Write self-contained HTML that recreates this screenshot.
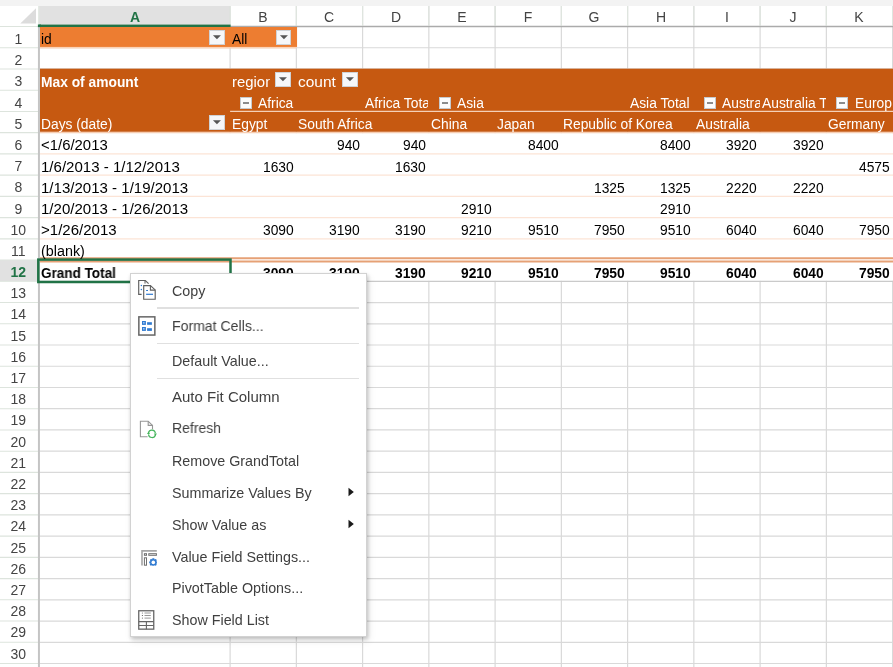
<!DOCTYPE html><html><head><meta charset='utf-8'><style>
*{margin:0;padding:0;box-sizing:border-box}
html,body{width:893px;height:667px;overflow:hidden;background:#fff;font-family:"Liberation Sans", sans-serif;position:relative}
.a{position:absolute}
.t,.m,.hn{will-change:transform}
.t{position:absolute;white-space:nowrap;line-height:1;font-size:13.8px;color:#000}
.cl{position:absolute;overflow:hidden;white-space:nowrap}
.hn{position:absolute;white-space:nowrap;line-height:1;font-size:14px;color:#444;text-align:center}
.m{position:absolute;white-space:nowrap;line-height:1;font-size:14.3px;color:#404040}
svg{position:absolute;left:0;top:0;overflow:visible}
</style></head><body>
<svg class="a" width="893" height="667" style="left:0;top:0">
<rect x="0" y="0" width="893" height="6" fill="#f3f3f3"/>
<rect x="38.95" y="6" width="191.14999999999998" height="20.5" fill="#e1e1e1"/>
<rect x="0" y="260.074" width="38.95" height="21.234" fill="#e1e1e1"/>
<polygon points="36,8.2 36,23.5 20.3,23.5" fill="#dcdcdc"/>
<line x1="0" y1="26.50" x2="38.95" y2="26.50" stroke="#dde4dd" stroke-width="1.1"/>
<line x1="38.95" y1="26.50" x2="893" y2="26.50" stroke="#d9d9d9" stroke-width="1.2"/>
<line x1="0" y1="47.73" x2="38.95" y2="47.73" stroke="#dde4dd" stroke-width="1.1"/>
<line x1="38.95" y1="47.73" x2="893" y2="47.73" stroke="#d9d9d9" stroke-width="1.2"/>
<line x1="0" y1="68.97" x2="38.95" y2="68.97" stroke="#dde4dd" stroke-width="1.1"/>
<line x1="38.95" y1="68.97" x2="893" y2="68.97" stroke="#d9d9d9" stroke-width="1.2"/>
<line x1="0" y1="90.20" x2="38.95" y2="90.20" stroke="#dde4dd" stroke-width="1.1"/>
<line x1="38.95" y1="90.20" x2="893" y2="90.20" stroke="#d9d9d9" stroke-width="1.2"/>
<line x1="0" y1="111.44" x2="38.95" y2="111.44" stroke="#dde4dd" stroke-width="1.1"/>
<line x1="38.95" y1="111.44" x2="893" y2="111.44" stroke="#d9d9d9" stroke-width="1.2"/>
<line x1="0" y1="132.67" x2="38.95" y2="132.67" stroke="#dde4dd" stroke-width="1.1"/>
<line x1="38.95" y1="132.67" x2="893" y2="132.67" stroke="#d9d9d9" stroke-width="1.2"/>
<line x1="0" y1="153.90" x2="38.95" y2="153.90" stroke="#dde4dd" stroke-width="1.1"/>
<line x1="38.95" y1="153.90" x2="893" y2="153.90" stroke="#d9d9d9" stroke-width="1.2"/>
<line x1="0" y1="175.14" x2="38.95" y2="175.14" stroke="#dde4dd" stroke-width="1.1"/>
<line x1="38.95" y1="175.14" x2="893" y2="175.14" stroke="#d9d9d9" stroke-width="1.2"/>
<line x1="0" y1="196.37" x2="38.95" y2="196.37" stroke="#dde4dd" stroke-width="1.1"/>
<line x1="38.95" y1="196.37" x2="893" y2="196.37" stroke="#d9d9d9" stroke-width="1.2"/>
<line x1="0" y1="217.61" x2="38.95" y2="217.61" stroke="#dde4dd" stroke-width="1.1"/>
<line x1="38.95" y1="217.61" x2="893" y2="217.61" stroke="#d9d9d9" stroke-width="1.2"/>
<line x1="0" y1="238.84" x2="38.95" y2="238.84" stroke="#dde4dd" stroke-width="1.1"/>
<line x1="38.95" y1="238.84" x2="893" y2="238.84" stroke="#d9d9d9" stroke-width="1.2"/>
<line x1="0" y1="260.07" x2="38.95" y2="260.07" stroke="#dde4dd" stroke-width="1.1"/>
<line x1="38.95" y1="260.07" x2="893" y2="260.07" stroke="#d9d9d9" stroke-width="1.2"/>
<line x1="0" y1="281.31" x2="38.95" y2="281.31" stroke="#dde4dd" stroke-width="1.1"/>
<line x1="38.95" y1="281.31" x2="893" y2="281.31" stroke="#d9d9d9" stroke-width="1.2"/>
<line x1="0" y1="302.54" x2="38.95" y2="302.54" stroke="#dde4dd" stroke-width="1.1"/>
<line x1="38.95" y1="302.54" x2="893" y2="302.54" stroke="#d9d9d9" stroke-width="1.2"/>
<line x1="0" y1="323.78" x2="38.95" y2="323.78" stroke="#dde4dd" stroke-width="1.1"/>
<line x1="38.95" y1="323.78" x2="893" y2="323.78" stroke="#d9d9d9" stroke-width="1.2"/>
<line x1="0" y1="345.01" x2="38.95" y2="345.01" stroke="#dde4dd" stroke-width="1.1"/>
<line x1="38.95" y1="345.01" x2="893" y2="345.01" stroke="#d9d9d9" stroke-width="1.2"/>
<line x1="0" y1="366.24" x2="38.95" y2="366.24" stroke="#dde4dd" stroke-width="1.1"/>
<line x1="38.95" y1="366.24" x2="893" y2="366.24" stroke="#d9d9d9" stroke-width="1.2"/>
<line x1="0" y1="387.48" x2="38.95" y2="387.48" stroke="#dde4dd" stroke-width="1.1"/>
<line x1="38.95" y1="387.48" x2="893" y2="387.48" stroke="#d9d9d9" stroke-width="1.2"/>
<line x1="0" y1="408.71" x2="38.95" y2="408.71" stroke="#dde4dd" stroke-width="1.1"/>
<line x1="38.95" y1="408.71" x2="893" y2="408.71" stroke="#d9d9d9" stroke-width="1.2"/>
<line x1="0" y1="429.95" x2="38.95" y2="429.95" stroke="#dde4dd" stroke-width="1.1"/>
<line x1="38.95" y1="429.95" x2="893" y2="429.95" stroke="#d9d9d9" stroke-width="1.2"/>
<line x1="0" y1="451.18" x2="38.95" y2="451.18" stroke="#dde4dd" stroke-width="1.1"/>
<line x1="38.95" y1="451.18" x2="893" y2="451.18" stroke="#d9d9d9" stroke-width="1.2"/>
<line x1="0" y1="472.41" x2="38.95" y2="472.41" stroke="#dde4dd" stroke-width="1.1"/>
<line x1="38.95" y1="472.41" x2="893" y2="472.41" stroke="#d9d9d9" stroke-width="1.2"/>
<line x1="0" y1="493.65" x2="38.95" y2="493.65" stroke="#dde4dd" stroke-width="1.1"/>
<line x1="38.95" y1="493.65" x2="893" y2="493.65" stroke="#d9d9d9" stroke-width="1.2"/>
<line x1="0" y1="514.88" x2="38.95" y2="514.88" stroke="#dde4dd" stroke-width="1.1"/>
<line x1="38.95" y1="514.88" x2="893" y2="514.88" stroke="#d9d9d9" stroke-width="1.2"/>
<line x1="0" y1="536.12" x2="38.95" y2="536.12" stroke="#dde4dd" stroke-width="1.1"/>
<line x1="38.95" y1="536.12" x2="893" y2="536.12" stroke="#d9d9d9" stroke-width="1.2"/>
<line x1="0" y1="557.35" x2="38.95" y2="557.35" stroke="#dde4dd" stroke-width="1.1"/>
<line x1="38.95" y1="557.35" x2="893" y2="557.35" stroke="#d9d9d9" stroke-width="1.2"/>
<line x1="0" y1="578.58" x2="38.95" y2="578.58" stroke="#dde4dd" stroke-width="1.1"/>
<line x1="38.95" y1="578.58" x2="893" y2="578.58" stroke="#d9d9d9" stroke-width="1.2"/>
<line x1="0" y1="599.82" x2="38.95" y2="599.82" stroke="#dde4dd" stroke-width="1.1"/>
<line x1="38.95" y1="599.82" x2="893" y2="599.82" stroke="#d9d9d9" stroke-width="1.2"/>
<line x1="0" y1="621.05" x2="38.95" y2="621.05" stroke="#dde4dd" stroke-width="1.1"/>
<line x1="38.95" y1="621.05" x2="893" y2="621.05" stroke="#d9d9d9" stroke-width="1.2"/>
<line x1="0" y1="642.29" x2="38.95" y2="642.29" stroke="#dde4dd" stroke-width="1.1"/>
<line x1="38.95" y1="642.29" x2="893" y2="642.29" stroke="#d9d9d9" stroke-width="1.2"/>
<line x1="0" y1="663.52" x2="38.95" y2="663.52" stroke="#dde4dd" stroke-width="1.1"/>
<line x1="38.95" y1="663.52" x2="893" y2="663.52" stroke="#d9d9d9" stroke-width="1.2"/>
<line x1="230.10" y1="6" x2="230.10" y2="667" stroke="#d9d9d9" stroke-width="1.2"/>
<line x1="296.35" y1="6" x2="296.35" y2="667" stroke="#d9d9d9" stroke-width="1.2"/>
<line x1="362.60" y1="6" x2="362.60" y2="667" stroke="#d9d9d9" stroke-width="1.2"/>
<line x1="428.85" y1="6" x2="428.85" y2="667" stroke="#d9d9d9" stroke-width="1.2"/>
<line x1="495.10" y1="6" x2="495.10" y2="667" stroke="#d9d9d9" stroke-width="1.2"/>
<line x1="561.35" y1="6" x2="561.35" y2="667" stroke="#d9d9d9" stroke-width="1.2"/>
<line x1="627.60" y1="6" x2="627.60" y2="667" stroke="#d9d9d9" stroke-width="1.2"/>
<line x1="693.85" y1="6" x2="693.85" y2="667" stroke="#d9d9d9" stroke-width="1.2"/>
<line x1="760.10" y1="6" x2="760.10" y2="667" stroke="#d9d9d9" stroke-width="1.2"/>
<line x1="826.35" y1="6" x2="826.35" y2="667" stroke="#d9d9d9" stroke-width="1.2"/>
<line x1="892.60" y1="6" x2="892.60" y2="667" stroke="#d9d9d9" stroke-width="1.2"/>
<line x1="38.95" y1="26.5" x2="893" y2="26.5" stroke="#ababab" stroke-width="1.4"/>
<rect x="229.50" y="6" width="1.2" height="19.8" fill="#dfe5df"/>
<rect x="295.75" y="6" width="1.2" height="19.8" fill="#dfe5df"/>
<rect x="362.00" y="6" width="1.2" height="19.8" fill="#dfe5df"/>
<rect x="428.25" y="6" width="1.2" height="19.8" fill="#dfe5df"/>
<rect x="494.50" y="6" width="1.2" height="19.8" fill="#dfe5df"/>
<rect x="560.75" y="6" width="1.2" height="19.8" fill="#dfe5df"/>
<rect x="627.00" y="6" width="1.2" height="19.8" fill="#dfe5df"/>
<rect x="693.25" y="6" width="1.2" height="19.8" fill="#dfe5df"/>
<rect x="759.50" y="6" width="1.2" height="19.8" fill="#dfe5df"/>
<rect x="825.75" y="6" width="1.2" height="19.8" fill="#dfe5df"/>
<rect x="892.00" y="6" width="1.2" height="19.8" fill="#dfe5df"/>
<rect x="37.95" y="24.6" width="192.64999999999998" height="2.8" fill="#217346"/>
<rect x="39.95" y="27.0" width="257.1" height="19.934" fill="#ED7D31"/>
<line x1="39.95" y1="47.73" x2="296.35" y2="47.73" stroke="#FAD3B8" stroke-width="1.3"/>
<rect x="39.95" y="68.668" width="854.05" height="63.102000000000004" fill="#C65911"/>
<rect x="39.95" y="133.17000000000002" width="854.05" height="147.638" fill="#ffffff"/>
<line x1="39.95" y1="132.67" x2="893" y2="132.67" stroke="#F6CDB2" stroke-width="1.3"/>
<line x1="39.95" y1="153.90" x2="893" y2="153.90" stroke="#FCE4D6" stroke-width="1.2"/>
<line x1="39.95" y1="175.14" x2="893" y2="175.14" stroke="#FCE4D6" stroke-width="1.2"/>
<line x1="39.95" y1="196.37" x2="893" y2="196.37" stroke="#FCE4D6" stroke-width="1.2"/>
<line x1="39.95" y1="217.61" x2="893" y2="217.61" stroke="#FCE4D6" stroke-width="1.2"/>
<line x1="39.95" y1="238.84" x2="893" y2="238.84" stroke="#FCE4D6" stroke-width="1.2"/>
<line x1="230.1" y1="111.4" x2="893" y2="111.4" stroke="#F4D0B8" stroke-width="1.3"/>
<line x1="39.95" y1="258.3" x2="893" y2="258.3" stroke="#E6A176" stroke-width="2"/>
<line x1="39.95" y1="261.6" x2="893" y2="261.6" stroke="#E6A176" stroke-width="2"/>
<line x1="38.95" y1="281.31" x2="893" y2="281.31" stroke="#cacaca" stroke-width="1.2"/>
<line x1="38.95" y1="26.5" x2="38.95" y2="667" stroke="#c4c4c4" stroke-width="2"/>
<rect x="38.05" y="6" width="1.3" height="20.5" fill="#e3e9e3"/>
<rect x="37.95" y="24.5" width="3" height="2.6" fill="#217346"/>
<rect x="38.3" y="259.6" width="192.20000000000002" height="22.4" fill="none" stroke="#217346" stroke-width="2.5"/>
</svg>
<div class="hn" style="left:114.53px;top:10.4px;width:40px;color:#217346;font-weight:bold;">A</div>
<div class="hn" style="left:243.23px;top:10.4px;width:40px;">B</div>
<div class="hn" style="left:309.48px;top:10.4px;width:40px;">C</div>
<div class="hn" style="left:375.73px;top:10.4px;width:40px;">D</div>
<div class="hn" style="left:441.98px;top:10.4px;width:40px;">E</div>
<div class="hn" style="left:508.23px;top:10.4px;width:40px;">F</div>
<div class="hn" style="left:574.48px;top:10.4px;width:40px;">G</div>
<div class="hn" style="left:640.73px;top:10.4px;width:40px;">H</div>
<div class="hn" style="left:706.98px;top:10.4px;width:40px;">I</div>
<div class="hn" style="left:773.23px;top:10.4px;width:40px;">J</div>
<div class="hn" style="left:839.48px;top:10.4px;width:40px;">K</div>
<div class="hn" style="left:0;top:31.90px;width:36.6px;">1</div>
<div class="hn" style="left:0;top:53.10px;width:36.6px;">2</div>
<div class="hn" style="left:0;top:74.30px;width:36.6px;">3</div>
<div class="hn" style="left:0;top:95.50px;width:36.6px;">4</div>
<div class="hn" style="left:0;top:116.70px;width:36.6px;">5</div>
<div class="hn" style="left:0;top:137.90px;width:36.6px;">6</div>
<div class="hn" style="left:0;top:159.10px;width:36.6px;">7</div>
<div class="hn" style="left:0;top:180.30px;width:36.6px;">8</div>
<div class="hn" style="left:0;top:201.50px;width:36.6px;">9</div>
<div class="hn" style="left:0;top:222.70px;width:36.6px;">10</div>
<div class="hn" style="left:0;top:243.90px;width:36.6px;">11</div>
<div class="hn" style="left:0;top:265.09px;width:36.6px;color:#217346;font-weight:bold;">12</div>
<div class="hn" style="left:0;top:286.29px;width:36.6px;">13</div>
<div class="hn" style="left:0;top:307.49px;width:36.6px;">14</div>
<div class="hn" style="left:0;top:328.69px;width:36.6px;">15</div>
<div class="hn" style="left:0;top:349.89px;width:36.6px;">16</div>
<div class="hn" style="left:0;top:371.09px;width:36.6px;">17</div>
<div class="hn" style="left:0;top:392.29px;width:36.6px;">18</div>
<div class="hn" style="left:0;top:413.49px;width:36.6px;">19</div>
<div class="hn" style="left:0;top:434.69px;width:36.6px;">20</div>
<div class="hn" style="left:0;top:455.89px;width:36.6px;">21</div>
<div class="hn" style="left:0;top:477.09px;width:36.6px;">22</div>
<div class="hn" style="left:0;top:498.29px;width:36.6px;">23</div>
<div class="hn" style="left:0;top:519.49px;width:36.6px;">24</div>
<div class="hn" style="left:0;top:540.69px;width:36.6px;">25</div>
<div class="hn" style="left:0;top:561.89px;width:36.6px;">26</div>
<div class="hn" style="left:0;top:583.09px;width:36.6px;">27</div>
<div class="hn" style="left:0;top:604.29px;width:36.6px;">28</div>
<div class="hn" style="left:0;top:625.49px;width:36.6px;">29</div>
<div class="hn" style="left:0;top:646.69px;width:36.6px;">30</div>
<div class="t" style="left:40.95px;top:33.12px;color:#000;font-size:13.8px;">id</div>
<div class="t" style="left:232.30px;top:33.12px;color:#000;font-size:13.8px;">All</div>
<div class="a" style="left:209.3px;top:30.1px;width:15.7px;height:14.7px;background:#f6f7f9;border:1px solid #cfd2d6"></div>
<svg class="a" style="left:209.3px;top:30.1px" width="15.7" height="14.7"><polygon points="3.9499999999999997,5.25 11.95,5.25 7.949999999999999,9.35" fill="#555"/></svg>
<div class="a" style="left:275.5px;top:30.1px;width:15.7px;height:14.7px;background:#f6f7f9;border:1px solid #cfd2d6"></div>
<svg class="a" style="left:275.5px;top:30.1px" width="15.7" height="14.7"><polygon points="3.9499999999999997,5.25 11.95,5.25 7.949999999999999,9.35" fill="#555"/></svg>
<div class="t" style="left:41.35px;top:76.39px;color:#fff;font-size:13.8px;font-weight:bold;">Max of amount</div>
<div class="cl" style="left:231.10px;top:68.97px;width:38.50px;height:21.23px"><div class="t" style="left:1.10px;top:6.62px;color:#fff;font-size:13.8px;transform:scaleX(1.08);transform-origin:left top;">region</div></div>
<div class="a" style="left:275.4px;top:72.4px;width:15.7px;height:14.7px;background:#f6f7f9;border:1px solid #cfd2d6"></div>
<svg class="a" style="left:275.4px;top:72.4px" width="15.7" height="14.7"><polygon points="3.9499999999999997,5.25 11.95,5.25 7.949999999999999,9.35" fill="#555"/></svg>
<div class="cl" style="left:297.35px;top:68.97px;width:38.25px;height:21.23px"><div class="t" style="left:1.10px;top:6.62px;color:#fff;font-size:13.8px;transform:scaleX(1.12);transform-origin:left top;">count</div></div>
<div class="a" style="left:342.0px;top:72.4px;width:15.7px;height:14.7px;background:#f6f7f9;border:1px solid #cfd2d6"></div>
<svg class="a" style="left:342.0px;top:72.4px" width="15.7" height="14.7"><polygon points="3.9499999999999997,5.25 11.95,5.25 7.949999999999999,9.35" fill="#555"/></svg>
<div class="t" style="left:40.95px;top:118.05px;color:#fff;font-size:13.8px;">Days (date)</div>
<div class="a" style="left:209.0px;top:115.2px;width:15.7px;height:14.7px;background:#f6f7f9;border:1px solid #cfd2d6"></div>
<svg class="a" style="left:209.0px;top:115.2px" width="15.7" height="14.7"><polygon points="3.9499999999999997,5.25 11.95,5.25 7.949999999999999,9.35" fill="#555"/></svg>
<div class="a" style="left:240.0px;top:97.0px;width:11.8px;height:11.8px;background:#fcfcfc;border:1px solid #c6cace"></div>
<div class="a" style="left:243.0px;top:102.2px;width:5.8px;height:1.6px;background:#8c8c8c"></div>
<div class="a" style="left:438.75px;top:97.0px;width:11.8px;height:11.8px;background:#fcfcfc;border:1px solid #c6cace"></div>
<div class="a" style="left:441.75px;top:102.2px;width:5.8px;height:1.6px;background:#8c8c8c"></div>
<div class="a" style="left:703.75px;top:97.0px;width:11.8px;height:11.8px;background:#fcfcfc;border:1px solid #c6cace"></div>
<div class="a" style="left:706.75px;top:102.2px;width:5.8px;height:1.6px;background:#8c8c8c"></div>
<div class="a" style="left:836.25px;top:97.0px;width:11.8px;height:11.8px;background:#fcfcfc;border:1px solid #c6cace"></div>
<div class="a" style="left:839.25px;top:102.2px;width:5.8px;height:1.6px;background:#8c8c8c"></div>
<div class="t" style="left:258.40px;top:96.82px;color:#fff;font-size:13.8px;">Africa</div>
<div class="cl" style="left:363.60px;top:90.20px;width:64.40px;height:21.23px"><div class="t" style="left:1.00px;top:6.62px;color:#fff;font-size:13.8px;">Africa Total</div></div>
<div class="t" style="left:457.45px;top:96.82px;color:#fff;font-size:13.8px;">Asia</div>
<div class="t" style="left:629.60px;top:96.82px;color:#fff;font-size:13.8px;">Asia Total</div>
<div class="cl" style="left:694.85px;top:90.20px;width:64.95px;height:21.23px"><div class="t" style="left:27.60px;top:6.62px;color:#fff;font-size:13.8px;">Australia</div></div>
<div class="cl" style="left:761.10px;top:90.20px;width:64.90px;height:21.23px"><div class="t" style="left:1.30px;top:6.62px;color:#fff;font-size:13.8px;">Australia Total</div></div>
<div class="cl" style="left:827.35px;top:90.20px;width:64.65px;height:21.23px"><div class="t" style="left:28.00px;top:6.62px;color:#fff;font-size:13.8px;">Europe</div></div>
<div class="t" style="left:232.10px;top:118.05px;color:#fff;font-size:13.8px;">Egypt</div>
<div class="t" style="left:298.35px;top:118.05px;color:#fff;font-size:13.8px;">South Africa</div>
<div class="t" style="left:430.85px;top:118.05px;color:#fff;font-size:13.8px;">China</div>
<div class="t" style="left:497.10px;top:118.05px;color:#fff;font-size:13.8px;">Japan</div>
<div class="t" style="left:563.35px;top:118.05px;color:#fff;font-size:13.8px;">Republic of Korea</div>
<div class="t" style="left:695.85px;top:118.05px;color:#fff;font-size:13.8px;">Australia</div>
<div class="t" style="left:828.35px;top:118.05px;color:#fff;font-size:13.8px;">Germany</div>
<div class="t" style="left:40.85px;top:139.29px;color:#000;font-size:13.8px;transform:scaleX(1.08);transform-origin:left top;">&lt;1/6/2013</div>
<div class="t" style="left:41.15px;top:160.52px;color:#000;font-size:13.8px;transform:scaleX(1.09);transform-origin:left top;">1/6/2013 - 1/12/2013</div>
<div class="t" style="left:41.15px;top:181.76px;color:#000;font-size:13.8px;transform:scaleX(1.09);transform-origin:left top;">1/13/2013 - 1/19/2013</div>
<div class="t" style="left:41.15px;top:202.99px;color:#000;font-size:13.8px;transform:scaleX(1.09);transform-origin:left top;">1/20/2013 - 1/26/2013</div>
<div class="t" style="left:40.85px;top:224.22px;color:#000;font-size:13.8px;transform:scaleX(1.09);transform-origin:left top;">&gt;1/26/2013</div>
<div class="t" style="left:40.95px;top:245.46px;color:#000;font-size:13.8px;transform:scaleX(1.04);transform-origin:left top;">(blank)</div>
<div class="t" style="left:41.15px;top:267.49px;color:#000;font-size:13.8px;font-weight:bold;transform:scaleX(0.98);transform-origin:left top;">Grand Total</div>
<div class="t" style="right:533.40px;top:139.29px;color:#000;font-size:13.8px;">940</div>
<div class="t" style="right:467.15px;top:139.29px;color:#000;font-size:13.8px;">940</div>
<div class="t" style="right:334.65px;top:139.29px;color:#000;font-size:13.8px;">8400</div>
<div class="t" style="right:202.15px;top:139.29px;color:#000;font-size:13.8px;">8400</div>
<div class="t" style="right:135.90px;top:139.29px;color:#000;font-size:13.8px;">3920</div>
<div class="t" style="right:69.65px;top:139.29px;color:#000;font-size:13.8px;">3920</div>
<div class="t" style="right:599.65px;top:160.52px;color:#000;font-size:13.8px;">1630</div>
<div class="t" style="right:467.15px;top:160.52px;color:#000;font-size:13.8px;">1630</div>
<div class="t" style="right:3.40px;top:160.52px;color:#000;font-size:13.8px;">4575</div>
<div class="t" style="right:268.40px;top:181.76px;color:#000;font-size:13.8px;">1325</div>
<div class="t" style="right:202.15px;top:181.76px;color:#000;font-size:13.8px;">1325</div>
<div class="t" style="right:135.90px;top:181.76px;color:#000;font-size:13.8px;">2220</div>
<div class="t" style="right:69.65px;top:181.76px;color:#000;font-size:13.8px;">2220</div>
<div class="t" style="right:400.90px;top:202.99px;color:#000;font-size:13.8px;">2910</div>
<div class="t" style="right:202.15px;top:202.99px;color:#000;font-size:13.8px;">2910</div>
<div class="t" style="right:599.65px;top:224.22px;color:#000;font-size:13.8px;">3090</div>
<div class="t" style="right:533.40px;top:224.22px;color:#000;font-size:13.8px;">3190</div>
<div class="t" style="right:467.15px;top:224.22px;color:#000;font-size:13.8px;">3190</div>
<div class="t" style="right:400.90px;top:224.22px;color:#000;font-size:13.8px;">9210</div>
<div class="t" style="right:334.65px;top:224.22px;color:#000;font-size:13.8px;">9510</div>
<div class="t" style="right:268.40px;top:224.22px;color:#000;font-size:13.8px;">7950</div>
<div class="t" style="right:202.15px;top:224.22px;color:#000;font-size:13.8px;">9510</div>
<div class="t" style="right:135.90px;top:224.22px;color:#000;font-size:13.8px;">6040</div>
<div class="t" style="right:69.65px;top:224.22px;color:#000;font-size:13.8px;">6040</div>
<div class="t" style="right:3.40px;top:224.22px;color:#000;font-size:13.8px;">7950</div>
<div class="t" style="right:599.65px;top:267.49px;color:#000;font-size:13.8px;font-weight:bold;">3090</div>
<div class="t" style="right:533.40px;top:267.49px;color:#000;font-size:13.8px;font-weight:bold;">3190</div>
<div class="t" style="right:467.15px;top:267.49px;color:#000;font-size:13.8px;font-weight:bold;">3190</div>
<div class="t" style="right:400.90px;top:267.49px;color:#000;font-size:13.8px;font-weight:bold;">9210</div>
<div class="t" style="right:334.65px;top:267.49px;color:#000;font-size:13.8px;font-weight:bold;">9510</div>
<div class="t" style="right:268.40px;top:267.49px;color:#000;font-size:13.8px;font-weight:bold;">7950</div>
<div class="t" style="right:202.15px;top:267.49px;color:#000;font-size:13.8px;font-weight:bold;">9510</div>
<div class="t" style="right:135.90px;top:267.49px;color:#000;font-size:13.8px;font-weight:bold;">6040</div>
<div class="t" style="right:69.65px;top:267.49px;color:#000;font-size:13.8px;font-weight:bold;">6040</div>
<div class="t" style="right:3.40px;top:267.49px;color:#000;font-size:13.8px;font-weight:bold;">7950</div>
<div class="a" style="left:130.2px;top:273.2px;width:236.4px;height:363.7px;background:#fff;border:1px solid #d2d2d2;box-shadow:1px 2px 4px rgba(0,0,0,0.22), 2px 4px 8px rgba(0,0,0,0.08)"></div>
<div class="m" style="left:171.6px;top:283.50px;">Copy</div>
<div class="m" style="left:171.6px;top:318.80px;transform:scaleX(0.985);transform-origin:left top;">Format Cells...</div>
<div class="m" style="left:171.6px;top:354.40px;">Default Value...</div>
<div class="m" style="left:171.6px;top:389.50px;transform:scaleX(1.05);transform-origin:left top;">Auto Fit Column</div>
<div class="m" style="left:171.6px;top:421.40px;transform:scaleX(0.98);transform-origin:left top;">Refresh</div>
<div class="m" style="left:171.6px;top:453.50px;">Remove GrandTotal</div>
<div class="m" style="left:171.6px;top:485.50px;">Summarize Values By</div>
<div class="m" style="left:171.6px;top:517.50px;">Show Value as</div>
<div class="m" style="left:171.6px;top:549.50px;">Value Field Settings...</div>
<div class="m" style="left:171.6px;top:581.40px;">PivotTable Options...</div>
<div class="m" style="left:171.6px;top:613.40px;">Show Field List</div>
<div class="a" style="left:157px;top:307.2px;width:202px;height:1.6px;background:#e0e0e0"></div>
<div class="a" style="left:157px;top:342.59999999999997px;width:202px;height:1.6px;background:#e0e0e0"></div>
<div class="a" style="left:157px;top:377.5px;width:202px;height:1.6px;background:#e0e0e0"></div>
<svg class="a" style="left:345px;top:486.4px" width="12" height="12"><polygon points="3.5,1.7 8.8,6 3.5,10.3" fill="#1a1a1a"/></svg>
<svg class="a" style="left:345px;top:518.4px" width="12" height="12"><polygon points="3.5,1.7 8.8,6 3.5,10.3" fill="#1a1a1a"/></svg>
<svg class="a" style="left:134px;top:276px" width="26" height="26" viewBox="0 0 26 26">
<path d="M7.6,18.3 H4.7 V4.5 H11.3 L14.6,7.6" fill="none" stroke="#5f5f5f" stroke-width="1.15"/>
<path d="M11,4.5 V7.6" fill="none" stroke="#5f5f5f" stroke-width="1"/>
<circle cx="7.4" cy="9.4" r="0.75" fill="#2f7ad1"/><circle cx="7.4" cy="13.5" r="0.75" fill="#2f7ad1"/>
<path d="M9.7,9.6 H16.4 L21.2,13.9 V23.2 H9.7 Z" fill="#fff" stroke="#5f5f5f" stroke-width="1.15"/>
<path d="M16.4,9.6 V14.1 H21.2" fill="none" stroke="#5f5f5f" stroke-width="1.1"/>
<path d="M12.1,14.5 H14" stroke="#2f7ad1" stroke-width="1.2"/>
<path d="M12.1,18.3 H19" stroke="#2f7ad1" stroke-width="1.2"/>
</svg>
<svg class="a" style="left:134px;top:312px" width="26" height="26" viewBox="0 0 26 26">
<rect x="4.85" y="4.85" width="16" height="18.2" fill="#fff" stroke="#666" stroke-width="1.5"/>
<rect x="8" y="9" width="3.9" height="3.9" fill="#2f7ad1"/><rect x="8" y="15" width="3.9" height="3.9" fill="#2f7ad1"/>
<rect x="9" y="10" width="1.6" height="1.6" fill="#9cc2ee"/><rect x="9" y="16" width="1.6" height="1.6" fill="#9cc2ee"/>
<rect x="13.1" y="10.2" width="4.8" height="2.6" fill="#2f7ad1"/><rect x="13.1" y="16.2" width="4.8" height="2.7" fill="#2f7ad1"/>
</svg>
<svg class="a" style="left:134px;top:416px" width="26" height="26" viewBox="0 0 26 26">
<path d="M13.6,20.7 H6.4 V5.3 H14.2 L18.5,9.4 V13.3" fill="none" stroke="#969696" stroke-width="1.1"/>
<path d="M14.2,5.3 V9.4 H18.5" fill="none" stroke="#969696" stroke-width="1.1"/>
<path d="M14.5,16.8 A3.5,3.5 0 0 1 21.4,17.2" fill="none" stroke="#45b45c" stroke-width="1.15"/>
<path d="M21.4,18.8 A3.5,3.5 0 0 1 14.5,18.4" fill="none" stroke="#45b45c" stroke-width="1.15"/>
<polygon points="13.0,18.0 16.0,18.0 14.5,15.6" fill="#45b45c"/>
<polygon points="19.9,17.6 22.9,17.6 21.4,20.0" fill="#45b45c"/>
</svg>
<svg class="a" style="left:134px;top:544px" width="26" height="26" viewBox="0 0 26 26">
<path d="M8,21.6 V6.9 H22.8" fill="none" stroke="#a6a6a6" stroke-width="1.6"/>
<rect x="10.4" y="9.7" width="2.1" height="1.6" fill="none" stroke="#6e6e6e" stroke-width="1"/>
<rect x="14.8" y="9.7" width="7.6" height="1.6" fill="none" stroke="#6e6e6e" stroke-width="1"/>
<rect x="10.4" y="13.8" width="2.1" height="7.4" fill="none" stroke="#6e6e6e" stroke-width="1"/>
<clipPath id="gc"><rect x="0" y="0" width="22.9" height="21.7"/></clipPath><g clip-path="url(#gc)"><g transform="translate(19.3,18.4) scale(0.95)">
<path d="M-1,-4.3 H1 L1.3,-3 L2.6,-3.6 L3.8,-2.4 L3.2,-1.2 L4.4,-0.9 V1 L3.1,1.3 L3.7,2.6 L2.5,3.8 L1.2,3.1 L0.9,4.3 H-1 L-1.3,3.1 L-2.6,3.7 L-3.8,2.5 L-3.1,1.2 L-4.3,0.9 V-1 L-3,-1.3 L-3.6,-2.6 L-2.4,-3.8 L-1.2,-3.1 Z" fill="#2f7ad1"/>
<circle cx="0" cy="0" r="1.9" fill="#fff"/>
</g></g>
</svg>
<svg class="a" style="left:134px;top:606px" width="26" height="26" viewBox="0 0 26 26">
<rect x="4.75" y="4.75" width="15" height="18.4" fill="#fff" stroke="#666" stroke-width="1.3"/>
<path d="M4.75,15.6 H19.75 M4.75,19.5 H19.75 M12.4,15.6 V23.15" stroke="#666" stroke-width="1.1"/>
<path d="M10.5,7 H16.8 M10.5,9.5 H16.8 M10.5,12.1 H16.8" stroke="#8c8c8c" stroke-width="0.9"/>
<circle cx="8.4" cy="7" r="0.6" fill="#777"/><circle cx="8.4" cy="9.5" r="0.6" fill="#555"/><circle cx="8.4" cy="12.1" r="0.6" fill="#777"/>
</svg>
</body></html>
